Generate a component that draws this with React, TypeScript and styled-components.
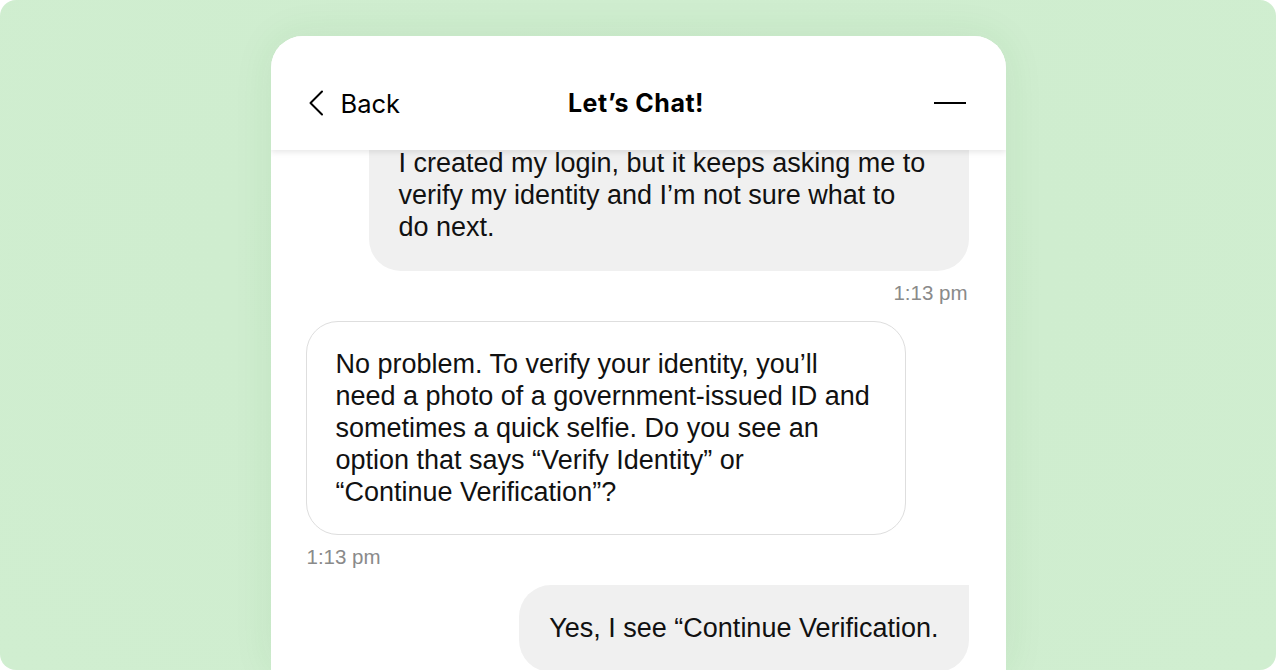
import React from "react";
import styled, { createGlobalStyle } from "styled-components";

const GlobalStyle = createGlobalStyle`
  html, body {
    margin: 0;
    padding: 0;
    background: #ffffff;
  }
  * {
    box-sizing: border-box;
  }
`;

const Frame = styled.main`
  height: 670px;
  border-radius: 16px;
  overflow: hidden;
  background: radial-gradient(ellipse at 50% 40%, #c9eaca 0%, #cfedcf 45%, #d0eed0 100%);
  display: flex;
  justify-content: center;
  padding-top: 36px;
`;

const Card = styled.section`
  width: 735px;
  height: 100%;
  background: #ffffff;
  border-radius: 32px 32px 0 0;
  box-shadow: 0 0 40px rgba(40, 110, 40, 0.08);
  display: flex;
  flex-direction: column;
  overflow: hidden;
`;

const Header = styled.header`
  position: relative;
  z-index: 2;
  flex: 0 0 114px;
  display: grid;
  grid-template-columns: 1fr auto 1fr;
  align-items: center;
  padding: 20px 40px 0 36px;
  background: #ffffff;
  box-shadow: 0 2px 6px rgba(0, 0, 0, 0.1);
  font-family: Inter, "Noto Sans", sans-serif;
  color: #000000;
`;

const BackButton = styled.button`
  justify-self: start;
  display: flex;
  align-items: center;
  gap: 16px;
  padding: 0;
  border: none;
  background: none;
  font: inherit;
  font-size: 25.5px;
  color: inherit;
  cursor: pointer;
`;

const Title = styled.h1`
  margin: 0;
  font-size: 25px;
  font-weight: 700;
  letter-spacing: 0.5px;
`;

const Minimize = styled.button`
  justify-self: end;
  width: 32px;
  height: 20px;
  padding: 0;
  border: none;
  background: none;
  display: flex;
  align-items: center;
  cursor: pointer;

  &::before {
    content: "";
    display: block;
    width: 32px;
    height: 2px;
    background: #000000;
  }
`;

const Body = styled.div`
  flex: 1;
  overflow: hidden;
  padding: 0 37px 0 35px;
`;

const Thread = styled.div`
  margin-top: -30px;
  display: flex;
  flex-direction: column;
  font-family: "Liberation Sans", Arial, sans-serif;
`;

const Bubble = styled.div<{ $from: "user" | "agent" }>`
  max-width: 600px;
  font-size: 27px;
  line-height: 32px;
  color: #111111;
  align-self: ${(p) => (p.$from === "user" ? "flex-end" : "flex-start")};
  padding: ${(p) => (p.$from === "user" ? "27px 30px 28px" : "26px 29px")};
  background: ${(p) => (p.$from === "user" ? "#f0f0f0" : "#ffffff")};
  border: ${(p) => (p.$from === "user" ? "none" : "1px solid #dedede")};
  border-radius: ${(p) => (p.$from === "user" ? "32px 0 32px 32px" : "32px")};
`;

const Time = styled.span<{ $from: "user" | "agent" }>`
  align-self: ${(p) => (p.$from === "user" ? "flex-end" : "flex-start")};
  margin: 10px 0 16px;
  padding: 0 1px;
  font-size: 20.5px;
  line-height: 24px;
  color: #8a8a8a;
`;

type Message = {
  from: "user" | "agent";
  text: string;
  time?: string;
};

// no-break spaces keep short closing phrases together on the last line
const messages: Message[] = [
  {
    from: "user",
    text: "I created my login, but it keeps asking me to verify my identity and I\u2019m not sure what to do\u00A0next.",
    time: "1:13 pm",
  },
  {
    from: "agent",
    text: "No problem. To verify your identity, you\u2019ll need a photo of a government-issued ID and sometimes a quick selfie. Do you see an option that says \u201CVerify Identity\u201D or \u201CContinue\u00A0Verification\u201D?",
    time: "1:13 pm",
  },
  {
    from: "user",
    text: "Yes, I see \u201CContinue Verification.",
  },
];

function ChevronLeft() {
  return (
    <svg width="18" height="26" viewBox="0 0 18 26" fill="none">
      <path d="M15 1.5L3.5 13L15 24.5" stroke="#000" strokeWidth="2" strokeLinecap="round" strokeLinejoin="round" />
    </svg>
  );
}

export default function App() {
  return (
    <>
      <GlobalStyle />
      <Frame>
        <Card>
          <Header>
            <BackButton>
              <ChevronLeft />
              Back
            </BackButton>
            <Title>Let’s Chat!</Title>
            <Minimize aria-label="Minimize" />
          </Header>
          <Body>
            <Thread>
              {messages.map((m, i) => (
                <React.Fragment key={i}>
                  <Bubble $from={m.from}>{m.text}</Bubble>
                  {m.time && <Time $from={m.from}>{m.time}</Time>}
                </React.Fragment>
              ))}
            </Thread>
          </Body>
        </Card>
      </Frame>
    </>
  );
}
